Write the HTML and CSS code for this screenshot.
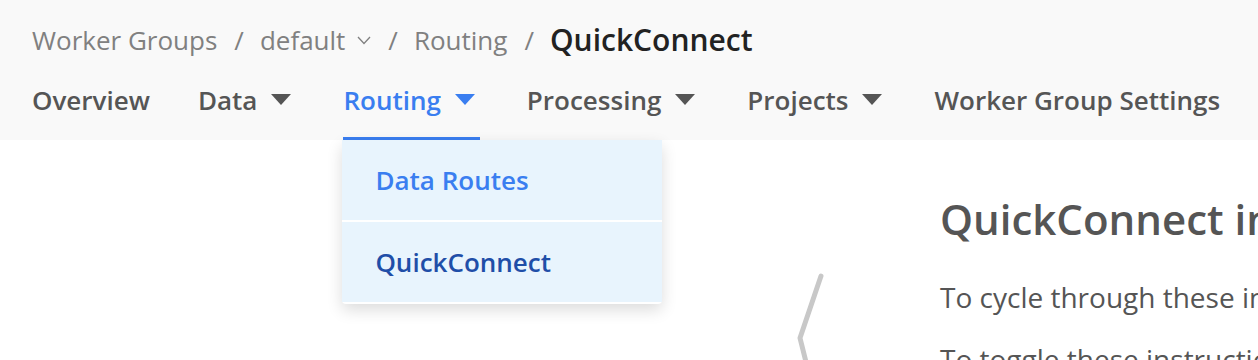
FILE: index.html
```html
<!DOCTYPE html>
<html>
<head>
<meta charset="utf-8">
<link rel="stylesheet" href="styles.css">
</head>
<body>
<header class="header">
  <nav class="crumbs">
    <span class="crumb">Worker Groups</span>
    <span class="sep">/</span>
    <span class="crumb">default<svg class="chev" viewBox="0 0 14 10" width="14" height="10"><path d="M1 2 L7 8.5 L13 2" fill="none" stroke="#808080" stroke-width="1.3"/></svg></span>
    <span class="sep">/</span>
    <span class="crumb">Routing</span>
    <span class="sep">/</span>
    <span class="crumb current">QuickConnect</span>
  </nav>
  <nav class="tabs">
    <div class="tab">Overview</div>
    <div class="tab drop">Data<span class="tri"></span></div>
    <div class="tab drop active">Routing<span class="tri"></span>
      <div class="menu">
        <div class="menu-item first">Data Routes</div>
        <div class="menu-item selected">QuickConnect</div>
      </div>
    </div>
    <div class="tab drop">Processing<span class="tri"></span></div>
    <div class="tab drop">Projects<span class="tri"></span></div>
    <div class="tab">Worker Group Settings</div>
  </nav>
</header>
<main class="content">
  <div class="arrow-col">
    <svg class="arrow" viewBox="0 0 40 100" width="40" height="100"><path d="M31 6 L10 68 L18 100" fill="none" stroke="#c8c8c8" stroke-width="5" stroke-linecap="round" stroke-linejoin="round"/></svg>
  </div>
  <section class="intro">
    <h1 class="title">QuickConnect instructions</h1>
    <p class="para">To cycle through these instructions, use the arrows on either side.</p>
    <p class="para">To toggle these instructions, click the help icon.</p>
  </section>
</main>
</body>
</html>
```

FILE: styles.css
```css
html, body {
  margin: 0;
  padding: 0;
}
body {
  font-family: "Open Sans", "Noto Sans", sans-serif;
  background: #ffffff;
  width: 1258px;
  height: 360px;
  overflow: hidden;
}
.header {
  background: #f9f9f9;
  height: 140px;
  box-sizing: border-box;
  padding: 22px 0 0 32px;
}
.crumbs {
  display: flex;
  align-items: center;
  height: 36px;
  line-height: 36px;
  font-size: 26px;
  color: #808080;
  white-space: nowrap;
}
.sep {
  margin: 0 16px 0 17px;
}
.crumb {
  display: flex;
  align-items: center;
}
.chev {
  margin-left: 12px;
}
.current {
  color: #222222;
  font-weight: 600;
  font-size: 30px;
}
.tabs {
  display: flex;
  margin-top: 24px;
  font-size: 26px;
  line-height: 36px;
  font-weight: 600;
  color: #555555;
  white-space: nowrap;
}
.tab {
  position: relative;
  display: flex;
  align-items: flex-start;
  height: 55px;
  margin-right: 48px;
  border-bottom: 3px solid transparent;
}
.tab.drop {
  padding-right: 5px;
  margin-right: 47px;
}
.tab.active {
  color: #3a7ef0;
  border-bottom-color: #3a7ef0;
}
.tri {
  width: 0;
  height: 0;
  margin: 12px 0 0 14px;
  border-left: 10px solid transparent;
  border-right: 10px solid transparent;
  border-top: 11px solid currentColor;
}
.menu {
  position: absolute;
  top: 58px;
  left: -1px;
  width: 320px;
  background: #ffffff;
  border-radius: 4px;
  box-shadow: 0 6px 16px rgba(0, 0, 0, 0.14);
  padding-bottom: 2px;
  z-index: 5;
}
.menu-item {
  background: #e8f4fd;
  height: 80px;
  display: flex;
  align-items: center;
  padding-left: 33px;
  color: #3a7ef0;
}
.menu-item.first {
  margin-bottom: 2px;
}
.menu-item.selected {
  color: #1f4ea8;
}
.content {
  display: flex;
  white-space: nowrap;
  padding-left: 790px;
}
.arrow-col {
  flex-shrink: 0;
  width: 40px;
  padding-top: 130px;
}
.arrow {
  display: block;
}
.intro {
  flex-shrink: 0;
  margin-left: 110px;
}
.title {
  margin: 50px 0 0;
  font-size: 42px;
  font-weight: 600;
  color: #555555;
  line-height: 57px;
}
.para {
  margin: 31px 0 0;
  font-size: 28px;
  color: #555555;
  line-height: 38px;
}
.para + .para {
  margin-top: 24px;
}
```
